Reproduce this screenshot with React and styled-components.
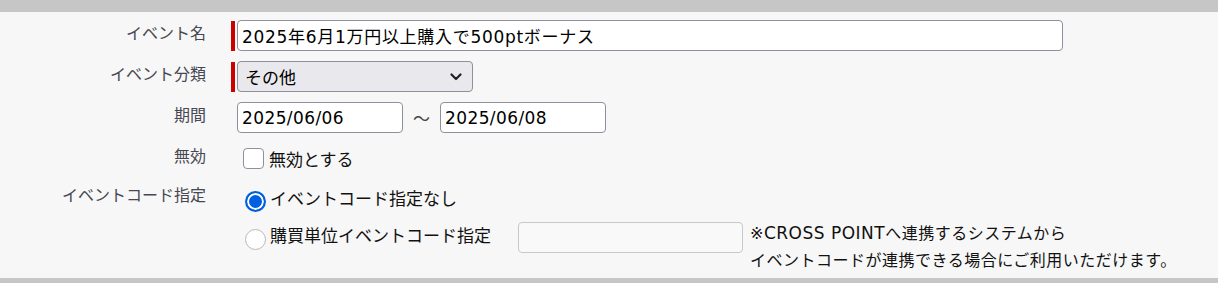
import React from 'react';
import styled, { createGlobalStyle } from 'styled-components';

const GlobalStyle = createGlobalStyle`
  html, body {
    margin: 0;
    padding: 0;
    background: #f7f7f7;
  }
  body {
    font-family: "Noto Sans CJK JP", "Noto Sans", sans-serif;
    color: #222;
  }
`;

const mixedFont = `"DejaVu Sans", "Noto Sans CJK JP", sans-serif`;

const Page = styled.div`
  width: 1218px;
  height: 283px;
  background: #f7f7f7;
  border-top: 12px solid #c6c6c6;
  border-bottom: 5px solid #c6c6c6;
  box-sizing: border-box;
  padding-top: 8px;
  overflow: hidden;
`;

const Row = styled.div`
  display: grid;
  grid-template-columns: 206px 1fr;
  column-gap: 25px;
  align-items: ${p => (p.$top ? 'start' : 'center')};
  min-height: 31px;
  margin-bottom: ${p => p.$gap ?? 10}px;
`;

const Label = styled.div`
  text-align: right;
  font-size: 16px;
  line-height: 18px;
  color: #474752;
  padding-top: ${p => (p.$top ? '1px' : '0')};
  padding-bottom: ${p => (p.$top ? '0' : '8px')};
`;

const Field = styled.div`
  display: flex;
  align-items: center;
  padding-left: ${p => (p.$required ? '0' : '6px')};
`;

const RequiredMark = styled.span`
  width: 4px;
  height: 30px;
  background: #cc0000;
  margin-right: 2px;
  flex: none;
`;

const TextInput = styled.input`
  box-sizing: border-box;
  width: ${p => p.$w}px;
  height: 31px;
  border: 1px solid #8f8f9d;
  border-radius: 4px;
  background: #fff;
  padding: 0 4px;
  font-family: ${mixedFont};
  font-size: 17px;
  letter-spacing: ${p => p.$ls ?? 0.4}px;
  color: #000;
  outline: none;

  &:disabled {
    border-color: #c8c8c8;
    background: #f9f9f9;
  }
`;

const SelectBox = styled.div`
  box-sizing: border-box;
  width: 236px;
  height: 31px;
  border: 1px solid #8f8f9d;
  border-radius: 4px;
  background: #e9e9ed;
  display: flex;
  align-items: center;
  justify-content: space-between;
  padding: 0 10px 0 7px;
  font-size: 17px;
  color: #000;
`;

const Tilde = styled.span`
  font-size: 17px;
  color: #444;
  margin: 0 10px 0 10px;
`;

const Check = styled.input`
  appearance: none;
  box-sizing: border-box;
  width: 21px;
  height: 21px;
  margin: 0 5px 0 6px;
  border: 1px solid #8f8f9d;
  border-radius: 4px;
  background: #fff;
`;

const Radio = styled.input`
  appearance: none;
  box-sizing: border-box;
  flex: none;
  width: 21px;
  height: 21px;
  margin: ${p => p.$mt ?? 0}px 4px 0 8px;
  border: 1px solid #b8b8b8;
  border-radius: 50%;
  background: #fff;

  &:checked {
    border: 2px solid #0060df;
    background: #0060df;
    box-shadow: inset 0 0 0 2px #fff;
  }
`;

const OptionText = styled.span`
  font-size: 17px;
  line-height: 27px;
  color: #111;
`;

const OptionList = styled.div`
  display: flex;
  flex-direction: column;
  gap: 9px;
`;

const Option = styled.label`
  display: flex;
  align-items: flex-start;
`;

const CodeInput = styled(TextInput)`
  margin: 1px 7px 0 27px;
`;

const Note = styled.div`
  font-family: ${mixedFont};
  font-size: 16px;
  line-height: 27px;
  letter-spacing: 0.5px;
  color: #111;
  margin-top: -1px;
`;

const Latin = styled.span`
  font-size: 17px;
`;

const Chevron = () => (
  <svg width="12" height="8" viewBox="0 0 12 8">
    <path d="M1.5 1.5 L6 6 L10.5 1.5" fill="none" stroke="#222" strokeWidth="2.2" strokeLinecap="round" strokeLinejoin="round" />
  </svg>
);

export default function App() {
  return (
    <>
      <GlobalStyle />
      <Page>
        <Row>
          <Label>イベント名</Label>
          <Field $required>
            <RequiredMark />
            <TextInput $w={826} $ls={0.7} defaultValue="2025年6月1万円以上購入で500ptボーナス" />
          </Field>
        </Row>
        <Row>
          <Label>イベント分類</Label>
          <Field $required>
            <RequiredMark />
            <SelectBox>
              <span>その他</span>
              <Chevron />
            </SelectBox>
          </Field>
        </Row>
        <Row>
          <Label>期間</Label>
          <Field>
            <TextInput $w={166} defaultValue="2025/06/06" />
            <Tilde>〜</Tilde>
            <TextInput $w={166} defaultValue="2025/06/08" />
          </Field>
        </Row>
        <Row>
          <Label>無効</Label>
          <Field>
            <Check type="checkbox" />
            <OptionText>無効とする</OptionText>
          </Field>
        </Row>
        <Row $top $gap={0}>
          <Label $top>イベントコード指定</Label>
          <Field>
            <OptionList>
              <Option>
                <Radio type="radio" name="code" defaultChecked $mt={7} />
                <OptionText>イベントコード指定なし</OptionText>
              </Option>
              <Option>
                <Radio type="radio" name="code" $mt={8} />
                <OptionText>購買単位イベントコード指定</OptionText>
                <CodeInput $w={225} disabled />
                <Note>
                  ※<Latin>CROSS POINT</Latin>へ連携するシステムから
                  <br />
                  イベントコードが連携できる場合にご利用いただけます。
                </Note>
              </Option>
            </OptionList>
          </Field>
        </Row>
      </Page>
    </>
  );
}
